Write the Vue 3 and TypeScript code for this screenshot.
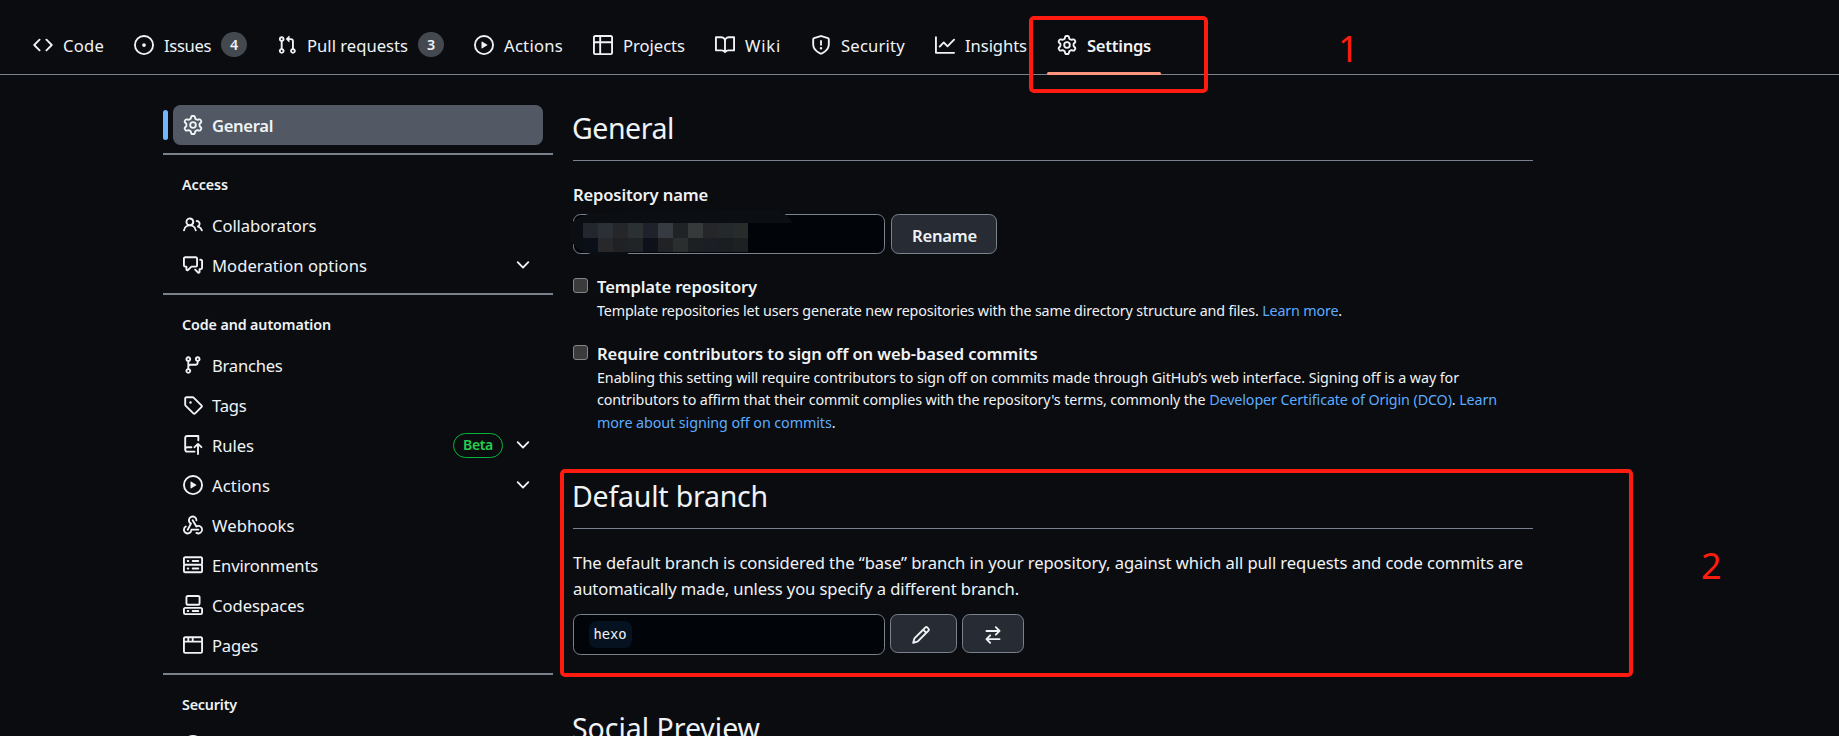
<script setup lang="ts">
import type { Directive } from 'vue'

interface NavItem { label: string; icon: string; width: number; count?: number; active?: boolean }
interface SideItem { label?: string; icon: string; width?: number; beta?: boolean; expandable?: boolean }
interface SideGroup { title: string; width: number; items: SideItem[] }

// Tracks a line of text out (or in) so that it fills the given width.
const vFit: Directive<HTMLElement, number | undefined> = {
  mounted(el, { value }) {
    if (value === undefined) return
    const natural = el.getBoundingClientRect().width
    const count = (el.textContent ?? '').trim().length
    el.style.letterSpacing = `${(value - natural) / count}px`
  },
}

const icons: Record<string, string> = {
  code: 'M4.72 3.22a.75.75 0 0 1 1.06 1.06L2.06 8l3.72 3.72a.75.75 0 1 1-1.06 1.06L.47 8.53a.75.75 0 0 1 0-1.06l4.25-4.25Zm6.56 0a.75.75 0 1 0-1.06 1.06L13.94 8l-3.72 3.72a.75.75 0 1 0 1.06 1.06l4.25-4.25a.75.75 0 0 0 0-1.06l-4.25-4.25Z',
  issue: 'M8 9.5a1.5 1.5 0 1 0 0-3 1.5 1.5 0 0 0 0 3ZM8 0a8 8 0 1 1 0 16A8 8 0 0 1 8 0ZM1.5 8a6.5 6.5 0 1 0 13 0 6.5 6.5 0 0 0-13 0Z',
  pull: 'M1.5 3.25a2.25 2.25 0 1 1 3 2.122v5.256a2.251 2.251 0 1 1-1.5 0V5.372A2.25 2.25 0 0 1 1.5 3.25Zm5.677-.177L9.573.677A.25.25 0 0 1 10 .854V2.5h1A2.5 2.5 0 0 1 13.5 5v5.628a2.251 2.251 0 1 1-1.5 0V5a1 1 0 0 0-1-1h-1v1.646a.25.25 0 0 1-.427.177L7.177 3.427a.25.25 0 0 1 0-.354ZM3.75 2.5a.75.75 0 1 0 0 1.5.75.75 0 0 0 0-1.5Zm0 9.5a.75.75 0 1 0 0 1.5.75.75 0 0 0 0-1.5Zm8.25.75a.75.75 0 1 0 1.5 0 .75.75 0 0 0-1.5 0Z',
  play: 'M8 0a8 8 0 1 1 0 16A8 8 0 0 1 8 0ZM1.5 8a6.5 6.5 0 1 0 13 0 6.5 6.5 0 0 0-13 0Zm4.879-2.773 4.264 2.559a.25.25 0 0 1 0 .428l-4.264 2.559A.25.25 0 0 1 6 10.559V5.442a.25.25 0 0 1 .379-.215Z',
  table: 'M0 1.75C0 .784.784 0 1.75 0h12.5C15.216 0 16 .784 16 1.75v12.5A1.75 1.75 0 0 1 14.25 16H1.75A1.75 1.75 0 0 1 0 14.25ZM6.5 6.5v8h7.75a.25.25 0 0 0 .25-.25V6.5Zm8-1.5V1.75a.25.25 0 0 0-.25-.25H6.5V5Zm-13 1.5v7.75c0 .138.112.25.25.25H5v-8ZM5 5V1.5H1.75a.25.25 0 0 0-.25.25V5Z',
  book: 'M0 1.75A.75.75 0 0 1 .75 1h4.253c1.227 0 2.317.59 3 1.501A3.743 3.743 0 0 1 11.006 1h4.245a.75.75 0 0 1 .75.75v10.5a.75.75 0 0 1-.75.75h-4.507a2.25 2.25 0 0 0-1.591.659l-.622.621a.75.75 0 0 1-1.06 0l-.622-.621A2.25 2.25 0 0 0 5.258 13H.75a.75.75 0 0 1-.75-.75Zm7.251 10.324.004-5.073-.002-2.253A2.25 2.25 0 0 0 5.003 2.5H1.5v9h3.757a3.75 3.75 0 0 1 1.994.574ZM8.755 4.75l-.004 7.322a3.752 3.752 0 0 1 1.992-.572H14.5v-9h-3.495a2.25 2.25 0 0 0-2.25 2.25Z',
  shield: 'M7.467.133a1.748 1.748 0 0 1 1.066 0l5.25 1.68A1.75 1.75 0 0 1 15 3.48V7c0 1.566-.32 3.182-1.303 4.682-.983 1.498-2.585 2.813-5.032 3.855a1.697 1.697 0 0 1-1.33 0c-2.447-1.042-4.049-2.357-5.032-3.855C1.32 10.182 1 8.566 1 7V3.48a1.75 1.75 0 0 1 1.217-1.667Zm.61 1.429a.25.25 0 0 0-.153 0l-5.25 1.68a.25.25 0 0 0-.174.238V7c0 1.358.275 2.666 1.057 3.86.784 1.194 2.121 2.34 4.366 3.297a.196.196 0 0 0 .154 0c2.245-.956 3.582-2.104 4.366-3.298C13.225 9.666 13.5 8.36 13.5 7V3.48a.251.251 0 0 0-.174-.237l-5.25-1.68ZM8.75 4.75v3a.75.75 0 0 1-1.5 0v-3a.75.75 0 0 1 1.5 0ZM9 10.5a1 1 0 1 1-2 0 1 1 0 0 1 2 0Z',
  graph: 'M1.5 1.75V13.5h13.75a.75.75 0 0 1 0 1.5H.75a.75.75 0 0 1-.75-.75V1.75a.75.75 0 0 1 1.5 0Zm14.28 2.53-5.25 5.25a.75.75 0 0 1-1.06 0L7 7.06 4.28 9.78a.751.751 0 0 1-1.042-.018.751.751 0 0 1-.018-1.042l3.25-3.25a.75.75 0 0 1 1.06 0L10 7.94l4.72-4.72a.751.751 0 0 1 1.042.018.751.751 0 0 1 .018 1.042Z',
  gear: 'M8 0a8.2 8.2 0 0 1 .701.031C9.444.095 9.99.645 10.16 1.29l.288 1.107c.018.066.079.158.212.224.231.114.454.243.668.386.123.082.233.09.299.071l1.103-.303c.644-.176 1.392.021 1.82.63.27.385.506.792.704 1.218.315.675.111 1.422-.364 1.891l-.814.806c-.049.048-.098.147-.088.294.016.257.016.515 0 .772-.01.147.038.246.088.294l.814.806c.475.469.679 1.216.364 1.891a7.977 7.977 0 0 1-.704 1.217c-.428.61-1.176.807-1.82.63l-1.102-.302c-.067-.019-.177-.011-.3.071a5.909 5.909 0 0 1-.668.386c-.133.066-.194.158-.211.224l-.29 1.106c-.168.646-.715 1.196-1.458 1.26a8.006 8.006 0 0 1-1.402 0c-.743-.064-1.289-.614-1.458-1.26l-.289-1.106c-.018-.066-.079-.158-.212-.224a5.738 5.738 0 0 1-.668-.386c-.123-.082-.233-.09-.299-.071l-1.103.303c-.644.176-1.392-.021-1.82-.63a8.12 8.12 0 0 1-.704-1.218c-.315-.675-.111-1.422.363-1.891l.815-.806c.05-.048.098-.147.088-.294a6.214 6.214 0 0 1 0-.772c.01-.147-.038-.246-.088-.294l-.815-.806C.635 6.045.431 5.298.746 4.623a7.92 7.92 0 0 1 .704-1.217c.428-.61 1.176-.807 1.82-.63l1.102.302c.067.019.177.011.3-.071.214-.143.437-.272.668-.386.133-.066.194-.158.211-.224l.29-1.106C6.009.645 6.556.095 7.299.03 7.53.01 7.764 0 8 0Zm-.571 1.525c-.036.003-.108.036-.137.146l-.289 1.105c-.147.561-.549.967-.998 1.189-.173.086-.34.183-.5.29-.417.278-.97.423-1.529.27l-1.103-.303c-.109-.03-.175.016-.195.045-.22.312-.412.644-.573.99-.014.031-.021.11.059.19l.815.806c.411.406.562.957.53 1.456a4.709 4.709 0 0 0 0 .582c.032.499-.119 1.05-.53 1.456l-.815.806c-.081.08-.073.159-.059.19.162.346.353.677.573.989.02.03.085.076.195.046l1.102-.303c.56-.153 1.113-.008 1.53.27.161.107.328.204.501.29.447.222.85.629.997 1.189l.289 1.105c.029.109.101.143.137.146a6.6 6.6 0 0 0 1.142 0c.036-.003.108-.036.137-.146l.289-1.105c.147-.561.549-.967.998-1.189.173-.086.34-.183.5-.29.417-.278.97-.423 1.529-.27l1.103.303c.109.029.175-.016.195-.045.22-.313.411-.644.573-.99.014-.031.021-.11-.059-.19l-.815-.806c-.411-.406-.562-.957-.53-1.456a4.709 4.709 0 0 0 0-.582c-.032-.499.119-1.05.53-1.456l.815-.806c.081-.08.073-.159.059-.19a6.464 6.464 0 0 0-.573-.989c-.02-.03-.085-.076-.195-.046l-1.102.303c-.56.153-1.113.008-1.53-.27a4.44 4.44 0 0 0-.501-.29c-.447-.222-.85-.629-.997-1.189l-.289-1.105c-.029-.11-.101-.143-.137-.146a6.6 6.6 0 0 0-1.142 0ZM11 8a3 3 0 1 1-6 0 3 3 0 0 1 6 0ZM9.5 8a1.5 1.5 0 1 0-3.001.001A1.5 1.5 0 0 0 9.5 8Z',
  people: 'M2 5.5a3.5 3.5 0 1 1 5.898 2.549 5.508 5.508 0 0 1 3.034 4.084.75.75 0 1 1-1.482.235 4 4 0 0 0-7.9 0 .75.75 0 0 1-1.482-.236A5.507 5.507 0 0 1 3.102 8.05 3.493 3.493 0 0 1 2 5.5ZM11 4a3.001 3.001 0 0 1 2.22 5.018 5.01 5.01 0 0 1 2.56 3.012.749.749 0 0 1-.885.954.752.752 0 0 1-.549-.514 3.507 3.507 0 0 0-2.522-2.372.75.75 0 0 1-.574-.73v-.352a.75.75 0 0 1 .416-.672A1.5 1.5 0 0 0 11 5.5.75.75 0 0 1 11 4Zm-5.5-.5a2 2 0 1 0-.001 3.999A2 2 0 0 0 5.5 3.5Z',
  discussion: 'M1.75 1h8.5c.966 0 1.75.784 1.75 1.75v5.5A1.75 1.75 0 0 1 10.25 10H7.061l-2.574 2.573A1.458 1.458 0 0 1 2 11.543V10h-.25A1.75 1.75 0 0 1 0 8.25v-5.5C0 1.784.784 1 1.75 1ZM1.5 2.75v5.5c0 .138.112.25.25.25h1a.75.75 0 0 1 .75.75v2.19l2.72-2.72a.749.749 0 0 1 .53-.22h3.5a.25.25 0 0 0 .25-.25v-5.5a.25.25 0 0 0-.25-.25h-8.5a.25.25 0 0 0-.25.25Zm13 2a.25.25 0 0 0-.25-.25h-.5a.75.75 0 0 1 0-1.5h.5c.966 0 1.75.784 1.75 1.75v5.5A1.75 1.75 0 0 1 14.25 12H14v1.543a1.458 1.458 0 0 1-2.487 1.03L9.22 12.28a.749.749 0 0 1 .326-1.275.749.749 0 0 1 .734.215l2.22 2.22v-2.19a.75.75 0 0 1 .75-.75h1a.25.25 0 0 0 .25-.25Z',
  branch: 'M9.5 3.25a2.25 2.25 0 1 1 3 2.122V6A2.5 2.5 0 0 1 10 8.5H6a1 1 0 0 0-1 1v1.128a2.251 2.251 0 1 1-1.5 0V5.372a2.25 2.25 0 1 1 1.5 0v1.836A2.493 2.493 0 0 1 6 7h4a1 1 0 0 0 1-1v-.628A2.25 2.25 0 0 1 9.5 3.25Zm-6 0a.75.75 0 1 0 1.5 0 .75.75 0 0 0-1.5 0Zm8.25-.75a.75.75 0 1 0 0 1.5.75.75 0 0 0 0-1.5ZM4.25 12a.75.75 0 1 0 0 1.5.75.75 0 0 0 0-1.5Z',
  tag: 'M1 7.775V2.75C1 1.784 1.784 1 2.75 1h5.025c.464 0 .91.184 1.238.513l6.25 6.25a1.75 1.75 0 0 1 0 2.474l-5.026 5.026a1.75 1.75 0 0 1-2.474 0l-6.25-6.25A1.752 1.752 0 0 1 1 7.775Zm1.5 0c0 .066.026.13.073.177l6.25 6.25a.25.25 0 0 0 .354 0l5.025-5.025a.25.25 0 0 0 0-.354l-6.25-6.25a.25.25 0 0 0-.177-.073H2.75a.25.25 0 0 0-.25.25ZM6 5a1 1 0 1 1 0 2 1 1 0 0 1 0-2Z',
  push: 'M1 2.5A2.5 2.5 0 0 1 3.5 0h8.75a.75.75 0 0 1 .75.75v3.5a.75.75 0 0 1-1.5 0V1.5h-8a1 1 0 0 0-1 1v6.708A2.493 2.493 0 0 1 3.5 9h3.25a.75.75 0 0 1 0 1.5H3.5a1 1 0 0 0 0 2h5.75a.75.75 0 0 1 0 1.5H3.5A2.5 2.5 0 0 1 1 11.5Zm13.23 7.79-1.48-1.48v6.44a.75.75 0 0 1-1.5 0V8.81L9.77 10.29a.75.75 0 1 1-1.06-1.06l2.505-2.504a1.11 1.11 0 0 1 1.57 0L15.29 9.23a.75.75 0 0 1-1.06 1.06Z',
  webhook: 'M5.5 4.25a2.25 2.25 0 0 1 4.5 0 .75.75 0 0 0 1.5 0 3.75 3.75 0 1 0-6.14 2.889l-2.272 4.258a.75.75 0 0 0 1.324.706L7 7.25a.75.75 0 0 0-.309-1.015A2.25 2.25 0 0 1 5.5 4.25ZM7.364 3.607a.75.75 0 0 1 1.03.257l2.608 4.349a3.75 3.75 0 1 1-.628 6.785.75.75 0 0 1 .752-1.299 2.25 2.25 0 1 0-.033-3.88.75.75 0 0 1-1.03-.256L7.107 4.636a.75.75 0 0 1 .257-1.03ZM2.9 8.776A.75.75 0 0 1 2.625 9.8 2.25 2.25 0 1 0 6 11.75a.75.75 0 0 1 .75-.751h5.5a.75.75 0 0 1 0 1.5H7.425a3.751 3.751 0 1 1-5.55-3.998.75.75 0 0 1 1.024.274Z',
  server: 'M1.75 1h12.5c.966 0 1.75.784 1.75 1.75v4c0 .372-.116.717-.314 1 .198.283.314.628.314 1v4a1.75 1.75 0 0 1-1.75 1.75H1.75A1.75 1.75 0 0 1 0 12.75v-4c0-.358.109-.707.314-1a1.739 1.739 0 0 1-.314-1v-4C0 1.784.784 1 1.75 1ZM1.5 2.75v4c0 .138.112.25.25.25h12.5a.25.25 0 0 0 .25-.25v-4a.25.25 0 0 0-.25-.25H1.75a.25.25 0 0 0-.25.25Zm.25 5.75a.25.25 0 0 0-.25.25v4c0 .138.112.25.25.25h12.5a.25.25 0 0 0 .25-.25v-4a.25.25 0 0 0-.25-.25ZM7 4.75A.75.75 0 0 1 7.75 4h4.5a.75.75 0 0 1 0 1.5h-4.5A.75.75 0 0 1 7 4.75ZM7.75 10h4.5a.75.75 0 0 1 0 1.5h-4.5a.75.75 0 0 1 0-1.5ZM3 4.75A.75.75 0 0 1 3.75 4h.5a.75.75 0 0 1 0 1.5h-.5A.75.75 0 0 1 3 4.75ZM3.75 10h.5a.75.75 0 0 1 0 1.5h-.5a.75.75 0 0 1 0-1.5Z',
  codespaces: 'M0 11.25c0-.966.784-1.75 1.75-1.75h12.5c.966 0 1.75.784 1.75 1.75v3A1.75 1.75 0 0 1 14.25 16H1.75A1.75 1.75 0 0 1 0 14.25Zm2-9.5C2 .784 2.784 0 3.75 0h8.5C13.216 0 14 .784 14 1.75v5a1.75 1.75 0 0 1-1.75 1.75h-8.5A1.75 1.75 0 0 1 2 6.75Zm1.75-.25a.25.25 0 0 0-.25.25v5c0 .138.112.25.25.25h8.5a.25.25 0 0 0 .25-.25v-5a.25.25 0 0 0-.25-.25Zm-2 9.5a.25.25 0 0 0-.25.25v3c0 .138.112.25.25.25h12.5a.25.25 0 0 0 .25-.25v-3a.25.25 0 0 0-.25-.25ZM7 12.75a.75.75 0 0 1 .75-.75h4.5a.75.75 0 0 1 0 1.5h-4.5a.75.75 0 0 1-.75-.75Zm-4 0a.75.75 0 0 1 .75-.75h.5a.75.75 0 0 1 0 1.5h-.5a.75.75 0 0 1-.75-.75Z',
  browser: 'M0 2.75C0 1.784.784 1 1.75 1h12.5c.966 0 1.75.784 1.75 1.75v10.5A1.75 1.75 0 0 1 14.25 15H1.75A1.75 1.75 0 0 1 0 13.25ZM14.5 6h-13v7.25c0 .138.112.25.25.25h12.5a.25.25 0 0 0 .25-.25Zm-6-3.5v2h6V2.75a.25.25 0 0 0-.25-.25ZM5 2.5v2h2v-2Zm-3.25 0a.25.25 0 0 0-.25.25V4.5h2v-2Z',
  chevron: 'M12.78 5.22a.749.749 0 0 1 0 1.06l-4.25 4.25a.749.749 0 0 1-1.06 0L3.22 6.28a.749.749 0 1 1 1.06-1.06L8 8.939l3.72-3.719a.749.749 0 0 1 1.06 0Z',
  pencil: 'M11.013 1.427a1.75 1.75 0 0 1 2.474 0l1.086 1.086a1.75 1.75 0 0 1 0 2.474l-8.61 8.61c-.21.21-.47.364-.756.445l-3.251.93a.75.75 0 0 1-.927-.928l.929-3.25c.081-.286.235-.547.445-.758l8.61-8.61Zm.176 4.823L9.75 4.81l-6.286 6.287a.253.253 0 0 0-.064.108l-.558 1.953 1.953-.558a.253.253 0 0 0 .108-.064Zm1.238-3.763a.25.25 0 0 0-.354 0L10.811 3.75l1.439 1.44 1.263-1.263a.25.25 0 0 0 0-.354Z',
  swap: 'M5.22 14.78a.75.75 0 0 0 1.06-1.06L4.56 12h8.69a.75.75 0 0 0 0-1.5H4.56l1.72-1.72a.75.75 0 0 0-1.06-1.06l-3 3a.75.75 0 0 0 0 1.06l3 3Zm5.56-6.5a.75.75 0 1 1-1.06-1.06l1.72-1.72H2.75a.75.75 0 0 1 0-1.5h8.69L9.72 2.28a.75.75 0 0 1 1.06-1.06l3 3a.75.75 0 0 1 0 1.06l-3 3Z',
}

const nav: NavItem[] = [
  { label: 'Code', icon: 'code', width: 41 },
  { label: 'Issues', icon: 'issue', width: 47, count: 4 },
  { label: 'Pull requests', icon: 'pull', width: 101, count: 3 },
  { label: 'Actions', icon: 'play', width: 59 },
  { label: 'Projects', icon: 'table', width: 62 },
  { label: 'Wiki', icon: 'book', width: 36 },
  { label: 'Security', icon: 'shield', width: 64 },
  { label: 'Insights', icon: 'graph', width: 62 },
  { label: 'Settings', icon: 'gear', width: 64, active: true },
]

const groups: SideGroup[] = [
  {
    title: 'Access', width: 46, items: [
      { label: 'Collaborators', icon: 'people', width: 104.5 },
      { label: 'Moderation options', icon: 'discussion', width: 155, expandable: true },
    ],
  },
  {
    title: 'Code and automation', width: 149, items: [
      { label: 'Branches', icon: 'branch', width: 70.5 },
      { label: 'Tags', icon: 'tag', width: 34.5 },
      { label: 'Rules', icon: 'push', width: 42, beta: true, expandable: true },
      { label: 'Actions', icon: 'play', width: 58, expandable: true },
      { label: 'Webhooks', icon: 'webhook', width: 82.5 },
      { label: 'Environments', icon: 'server', width: 106 },
      { label: 'Codespaces', icon: 'codespaces', width: 92.5 },
      { label: 'Pages', icon: 'browser', width: 46 },
    ],
  },
  { title: 'Security', width: 55, items: [{ icon: 'issue' }] },
]

// Two rows of pixelated cells that hide the repository name.
const mosaic: string[][] = [
  ['#23272d', '#2a3036', '#252629', '#2b3033', '#1f222b', '#363a41', '#1f2325', '#363a3b', '#25262a', '#242a2b', '#272c2b'],
  ['#0b1018', '#28282b', '#1f2124', '#212427', '#0e111a', '#212226', '#2a2e2f', '#1c2022', '#1b1e25', '#1a1e20', '#1d2122'],
]
</script>

<template>
  <div class="page">
    <nav class="repo-nav">
      <a v-for="item in nav" :key="item.label" class="nav-link" :class="{ active: item.active }">
        <svg class="icon" viewBox="0 0 16 16"><path :d="icons[item.icon]" /></svg>
        <span v-fit="item.width" class="label">{{ item.label }}</span>
        <span v-if="item.count" class="counter">{{ item.count }}</span>
      </a>
    </nav>

    <div class="layout">
      <aside class="sidebar">
        <a class="side-link current">
          <svg class="icon" viewBox="0 0 16 16"><path :d="icons.gear" /></svg>
          <span v-fit="61" class="label">General</span>
        </a>
        <section v-for="group in groups" :key="group.title" class="side-group">
          <h3 class="side-title"><span v-fit="group.width">{{ group.title }}</span></h3>
          <a v-for="item in group.items" :key="item.icon" class="side-link">
            <svg class="icon" viewBox="0 0 16 16"><path :d="icons[item.icon]" /></svg>
            <span v-if="item.label" v-fit="item.width" class="label">{{ item.label }}</span>
            <span class="side-tail">
              <span v-if="item.beta" class="beta">Beta</span>
              <svg v-if="item.expandable" class="icon" viewBox="0 0 16 16"><path :d="icons.chevron" /></svg>
            </span>
          </a>
        </section>
      </aside>

      <main class="content">
        <h2 class="heading"><span v-fit="102">General</span></h2>
        <div class="field-label"><span v-fit="135">Repository name</span></div>
        <div class="row name-row">
          <div class="input">
            <svg class="redaction" viewBox="0 0 230 48">
              <path d="M1 14 C6 8 14 4 26 3 L75 1 L208 0 Q216 3 223 13 L178 13 L178 42 L60 42 L56 45 L28 46 L14 42 Q4 38 1 30 Z" fill="#0b0f13" />
              <template v-for="(cells, r) in mosaic" :key="r">
                <rect v-for="(fill, c) in cells" :key="c" :x="13 + c * 15" :y="13 + r * 15" width="15.05" :height="r ? 14 : 15" :fill="fill" />
              </template>
            </svg>
          </div>
          <button class="button rename"><span v-fit="65">Rename</span></button>
        </div>

        <div class="option">
          <span class="checkbox"></span>
          <div class="option-body">
            <div class="option-title"><span v-fit="160">Template repository</span></div>
            <div class="option-line"><span v-fit="745">Template repositories let users generate new repositories with the same directory structure and files. <a>Learn more</a>.</span></div>
          </div>
        </div>
        <div class="option">
          <span class="checkbox"></span>
          <div class="option-body">
            <div class="option-title"><span v-fit="440.5">Require contributors to sign off on web-based commits</span></div>
            <div class="option-line"><span v-fit="862">Enabling this setting will require contributors to sign off on commits made through GitHub’s web interface. Signing off is a way for</span></div>
            <div class="option-line"><span v-fit="900">contributors to affirm that their commit complies with the repository's terms, commonly the <a>Developer Certificate of Origin (DCO)</a>. <a>Learn</a></span></div>
            <div class="option-line"><span v-fit="238.5"><a>more about signing off on commits</a>.</span></div>
          </div>
        </div>

        <h2 class="heading branch-heading"><span v-fit="196">Default branch</span></h2>
        <div class="branch-text">
          <div><span v-fit="950">The default branch is considered the “base” branch in your repository, against which all pull requests and code commits are</span></div>
          <div><span v-fit="446">automatically made, unless you specify a different branch.</span></div>
        </div>
        <div class="row branch-row">
          <div class="input branch-input"><span class="branch-name">hexo</span></div>
          <button class="button edit"><svg class="icon" viewBox="0 0 16 16"><path :d="icons.pencil" /></svg></button>
          <button class="button switch"><svg class="icon" viewBox="0 0 16 16"><path :d="icons.swap" /></svg></button>
        </div>

        <h2 class="heading preview-heading"><span v-fit="188">Social Preview</span></h2>
      </main>
    </div>

    <div class="mark mark-settings"></div>
    <div class="mark mark-branch"></div>
    <span class="step step-one">1</span>
    <span class="step step-two">2</span>
  </div>
</template>

<style>
html,
body {
  background: #0a0c10;
  overflow: hidden;
}
</style>

<style scoped>
.page {
  position: relative;
  width: 1839px;
  height: 736px;
  overflow: hidden;
  box-sizing: border-box;
  background: #0a0c10;
  color: #f0f3f6;
  font-family: "Noto Sans", "Open Sans", sans-serif;
  font-size: 16.6px;
}
.page *,
.page *::before {
  box-sizing: border-box;
}
.icon {
  width: 20px;
  height: 20px;
  flex: none;
  display: block;
  fill: currentColor;
}
.label {
  white-space: nowrap;
}
.repo-nav {
  display: flex;
  align-items: stretch;
  gap: 10px;
  height: 75px;
  padding: 15px 23px 0;
  border-bottom: 1px solid #7a828e;
}
.nav-link {
  position: relative;
  display: flex;
  align-items: center;
  gap: 10px;
  padding: 0 10px;
}
.nav-link .label {
  line-height: 24px;
  padding-top: 2px;
}
.active .label,
.current .label {
  font-weight: 600;
}
.nav-link.active::after {
  content: "";
  position: absolute;
  left: 0;
  right: 0;
  bottom: -1px;
  height: 3.5px;
  border-radius: 2px;
  background: #ff967d;
}
.counter {
  width: 26px;
  height: 25px;
  border-radius: 13px;
  background: #44484f;
  font-size: 14.3px;
  font-weight: 600;
  line-height: 25px;
  text-align: center;
}
.layout {
  display: flex;
  gap: 20px;
  padding: 30px 0 0 163px;
}
.sidebar {
  width: 390px;
  flex: none;
}
.side-link {
  position: relative;
  display: flex;
  align-items: center;
  gap: 9px;
  height: 40px;
  margin: 0 10px;
  padding: 0 10px;
  border-radius: 7.5px;
}
.side-link .label {
  line-height: 24px;
  padding-top: 1px;
}
.side-link.current {
  background: #525964;
}
.side-link.current::before {
  content: "";
  position: absolute;
  left: -10px;
  top: 5px;
  width: 5px;
  height: 30px;
  border-radius: 3px;
  background: #71b7ff;
}
.side-tail {
  display: flex;
  align-items: center;
  gap: 10px;
  margin-left: auto;
}
.beta {
  width: 50px;
  height: 25px;
  border: 1px solid #09b43a;
  border-radius: 13px;
  color: #26cd4d;
  font-size: 14px;
  font-weight: 600;
  letter-spacing: -0.35px;
  line-height: 22px;
  text-align: center;
}
.side-group {
  margin-top: 8px;
  padding-top: 10px;
  border-top: 2px solid #7a828e;
}
.side-title {
  margin: 0;
  padding-left: 19px;
  font-size: 14.3px;
  font-weight: 600;
  line-height: 40px;
  height: 40px;
}
.content {
  width: 960px;
  flex: none;
  white-space: nowrap;
}
.heading {
  height: 56px;
  margin: 0;
  border-bottom: 1px solid #7a828e;
  font-size: 28.5px;
  font-weight: 400;
  line-height: 46px;
}
.heading span {
  margin-left: -1px;
}
.field-label {
  margin: 20px 0 6px;
  height: 27px;
  font-weight: 600;
  line-height: 27px;
}
.row {
  display: flex;
  align-items: flex-start;
}
.input {
  position: relative;
  width: 312px;
  height: 40px;
  border: 1px solid #7a828e;
  border-radius: 7.5px;
  background: #010409;
}
.redaction {
  position: absolute;
  left: -4px;
  top: -5px;
  width: 230px;
  height: 48px;
}
.button {
  display: flex;
  align-items: center;
  justify-content: center;
  height: 40px;
  padding: 0;
  border: 1px solid #7a828e;
  border-radius: 7.5px;
  background: #272b33;
  color: #f0f3f6;
  font: inherit;
  font-weight: 600;
}
.rename {
  width: 106px;
  margin-left: 6px;
  padding-top: 2px;
  padding-left: 1px;
}
.option {
  display: flex;
  gap: 9px;
  margin-top: 18.5px;
}
.name-row + .option {
  margin-top: 19.5px;
}
.checkbox {
  width: 15px;
  height: 15px;
  margin-top: 4.5px;
  border: 1px solid #858585;
  border-radius: 3px;
  background: #3b3b3b;
}
.option-title {
  height: 26px;
  font-weight: 600;
  line-height: 26px;
}
.option-line {
  height: 22.5px;
  font-size: 14.3px;
  line-height: 22.5px;
}
.option-line a {
  color: #5eabff;
}
.branch-heading {
  margin-top: 39px;
}
.branch-text {
  margin: 20.5px 0 12px;
  line-height: 26.25px;
}
.branch-input {
  height: 41px;
  padding: 6px 15px;
}
.branch-name {
  display: block;
  width: 43px;
  height: 27px;
  padding-right: 1px;
  border-radius: 7.5px;
  background: #071220;
  font-family: "DejaVu Sans Mono", monospace;
  font-size: 13.8px;
  line-height: 27px;
  text-align: center;
}
.edit {
  width: 67px;
  height: 39px;
  margin-left: 5px;
  padding-right: 5px;
  padding-top: 3px;
}
.switch {
  width: 62px;
  height: 39px;
  margin-left: 5px;
  padding-top: 3px;
}
.preview-heading {
  margin-top: 50px;
}
.mark {
  position: absolute;
  border: 4px solid #ff1b0f;
  border-radius: 5px;
}
.mark-settings {
  left: 1029px;
  top: 16px;
  width: 179px;
  height: 77px;
}
.mark-branch {
  left: 560px;
  top: 469px;
  width: 1073px;
  height: 208px;
}
.step {
  position: absolute;
  color: #ff1b0f;
  font-family: "Noto Sans", sans-serif;
  font-size: 36px;
  line-height: 40px;
}
.step-one {
  left: 1338px;
  top: 29px;
}
.step-two {
  left: 1701px;
  top: 546px;
}
</style>
